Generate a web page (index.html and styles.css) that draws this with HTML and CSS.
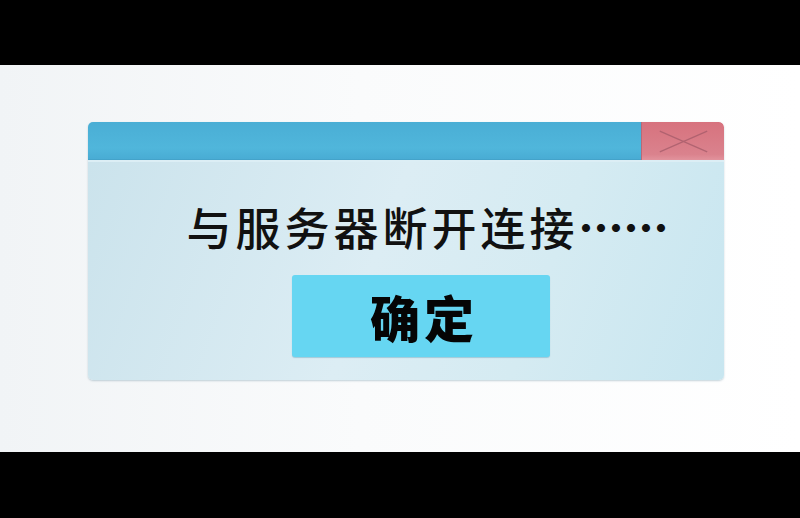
FILE: index.html
```html
<!DOCTYPE html>
<html lang="zh-CN">

<head>
    <meta charset="UTF-8">
    <meta name="viewport" content="width=device-width, initial-scale=1.0">
    <title>断开连接</title>

    <link rel="stylesheet" href="styles.css">
</head>

<body>
    <div class="bar"></div>

    <div class="stage">
        <!-- 提示窗口 -->
        <div class="dialog">
            <div class="titleBar">
                <div class="titleFill"></div>
                <div class="closeBtn">
                    <svg width="83" height="38" viewBox="0 0 83 38">
                        <path d="M18 9 L66 30 M66 9 L18 30" stroke="#a05866" stroke-width="1.2" fill="none" opacity="0.7" />
                    </svg>
                </div>
            </div>
            <div class="dialogBody">
                <p class="message">与服务器断开连接<span class="dots">……</span></p>
                <div class="okBtn">确定</div>
            </div>
        </div>
    </div>

    <div class="bar bottom"></div>
</body>

</html>
```

FILE: styles.css
```css
* {
    box-sizing: border-box;
}

body {
    margin: 0;
    background-color: #000;
    font-family: "Noto Sans CJK SC", "Noto Sans", sans-serif;
    height: 518px;
    display: flex;
    flex-direction: column;
}

.bar {
    height: 65px;
    background-color: #000;
}

.bar.bottom {
    height: 66px;
}

/* 中間白色區域 */
.stage {
    height: 387px;
    background: linear-gradient(90deg, #f1f4f6 0%, #fafbfc 45%, #ffffff 100%);
    padding: 57px 0 0 88px;
}

.dialog {
    width: 636px;
    height: 258px;
    border-radius: 5px;
    overflow: hidden;
    display: flex;
    flex-direction: column;
    box-shadow: 0 1px 2px rgba(90, 130, 150, 0.35);
}

.titleBar {
    height: 38px;
    display: flex;
}

.titleFill {
    flex: 1;
    background: linear-gradient(180deg, #4aaed5 0%, #50b6db 70%, #49acd4 100%);
    border-bottom: 1px solid #44a3ca;
}

.closeBtn {
    width: 83px;
    background: linear-gradient(180deg, #d7727e 0%, #da828d 85%, #e2939d 100%);
    border-radius: 0 5px 0 0;
    border-left: 1px solid #b86a78;
    display: flex;
}

.dialogBody {
    flex: 1;
    background: linear-gradient(110deg, #cbe3ec 0%, #dcedf4 45%, #d5ebf2 70%, #c8e6f0 100%);
    border-top: 2px solid #dceef5;
    display: flex;
    flex-direction: column;
    align-items: center;
}

.message {
    margin: 35px 0 0 43px;
    font-size: 45px;
    font-weight: 500;
    line-height: 60px;
    letter-spacing: 4px;
    color: #111;
}

.dots {
    font-weight: 900;
    letter-spacing: 0;
}

.okBtn {
    width: 258px;
    height: 82px;
    margin: 18px 0 0 30px;
    background-color: #66d6f2;
    border-radius: 3px;
    box-shadow: 0 1px 1px rgba(80, 150, 180, 0.4);
    display: flex;
    align-items: center;
    justify-content: center;
    padding-left: 6px;
    font-size: 50px;
    font-weight: 900;
    letter-spacing: 4px;
    color: #050505;
}
```
